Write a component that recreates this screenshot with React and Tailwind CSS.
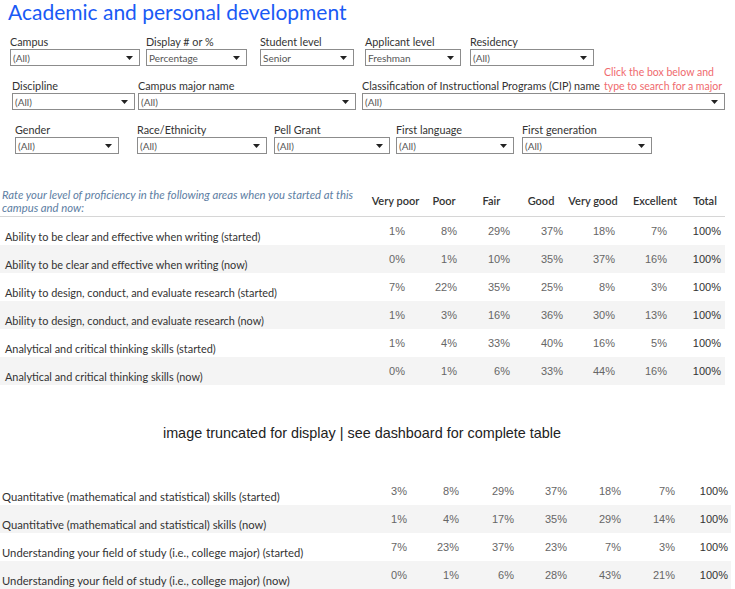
import React from 'react';

const topRows = [
  ['Ability to be clear and effective when writing (started)', ['1%', '8%', '29%', '37%', '18%', '7%', '100%']],
  ['Ability to be clear and effective when writing (now)', ['0%', '1%', '10%', '35%', '37%', '16%', '100%']],
  ['Ability to design, conduct, and evaluate research (started)', ['7%', '22%', '35%', '25%', '8%', '3%', '100%']],
  ['Ability to design, conduct, and evaluate research (now)', ['1%', '3%', '16%', '36%', '30%', '13%', '100%']],
  ['Analytical and critical thinking skills (started)', ['1%', '4%', '33%', '40%', '16%', '5%', '100%']],
  ['Analytical and critical thinking skills (now)', ['0%', '1%', '6%', '33%', '44%', '16%', '100%']],
];

const bottomRows = [
  ['Quantitative (mathematical and statistical) skills (started)', ['3%', '8%', '29%', '37%', '18%', '7%', '100%']],
  ['Quantitative (mathematical and statistical) skills (now)', ['1%', '4%', '17%', '35%', '29%', '14%', '100%']],
  ['Understanding your field of study (i.e., college major) (started)', ['7%', '23%', '37%', '23%', '7%', '3%', '100%']],
  ['Understanding your field of study (i.e., college major) (now)', ['0%', '1%', '6%', '28%', '43%', '21%', '100%']],
];

const headers = [
  ['Very poor', 'w-[51px]'],
  ['Poor', 'w-[46px]'],
  ['Fair', 'w-[49px]'],
  ['Good', 'w-[50px]'],
  ['Very good', 'w-[54px]'],
  ['Excellent', 'w-[70px]'],
  ['Total', 'w-[30px]'],
];

const topCols = ['w-[52px]', 'w-[52px]', 'w-[53px]', 'w-[53px]', 'w-[52px]', 'w-[52px]', 'w-[54px]'];
const bottomCols = ['w-[52px]', 'w-[52px]', 'w-[55px]', 'w-[53px]', 'w-[54px]', 'w-[54px]', 'w-[53px]'];

const Arrow = () => (
  <svg width="7" height="4" viewBox="0 0 7 4" className="shrink-0">
    <path d="M0 0h7L3.5 4z" fill="#222" />
  </svg>
);

// one quick filter: label over a dropdown box
const Filter = ({ label, value = '(All)', width, className = '' }) => (
  <div className={'flex flex-col ' + className}>
    <div className="h-[14px] leading-[14px] text-[10.8px] text-[#333] whitespace-nowrap">{label}</div>
    <div className={'h-[17px] border border-[#8c8c8c] bg-white flex items-center justify-between pl-[2px] pr-[6px] ' + width}>
      <span className="text-[10px] text-[#555] leading-none">{value}</span>
      <Arrow />
    </div>
  </div>
);

const Row = ({ label, values, cols, labelW, striped, pl, size }) => (
  <div className={'flex h-[28px] ' + (striped ? 'bg-[#f4f4f4]' : '')}>
    <div className={'self-end h-[15px] leading-[14px] text-[#333] whitespace-nowrap ' + labelW + ' ' + pl + ' ' + size}>{label}</div>
    {values.map((v, i) => (
      <div
        key={i}
        className={'flex items-center justify-end text-[11px] font-["Liberation_Sans",Arial,sans-serif] ' + cols[i] + (i === 6 ? ' text-[#333]' : ' text-[#666]')}
      >
        {v}
      </div>
    ))}
  </div>
);

const App = () => {
  return (
    <div className="w-[735px] h-[589px] overflow-hidden bg-white font-['Lato',sans-serif]">
      <h1 className="pl-[8px] h-[26px] leading-[24px] text-[21px] text-[#1a5af5]">Academic and personal development</h1>

      <div className="flex items-end mt-[9px]">
        <Filter label="Campus" width="w-[130px]" className="ml-[10px]" />
        <Filter label="Display # or %" value="Percentage" width="w-[101px]" className="ml-[6px]" />
        <Filter label="Student level" value="Senior" width="w-[94px]" className="ml-[13px]" />
        <Filter label="Applicant level" value="Freshman" width="w-[96px]" className="ml-[11px]" />
        <Filter label="Residency" width="w-[124px]" className="ml-[9px]" />
      </div>

      <div className="flex items-end mt-[13px]">
        <Filter label="Discipline" width="w-[123px]" className="ml-[12px]" />
        <Filter label="Campus major name" width="w-[218px]" className="ml-[3px]" />
        <div className="flex flex-col ml-[6px]">
          <div className="flex items-end h-[14px]">
            <div className="leading-[14px] text-[10.8px] text-[#333] whitespace-nowrap">Classification of Instructional Programs (CIP) name</div>
            <div className="h-[14px] flex flex-col justify-end ml-[4px]">
              <div className="leading-[14px] text-[10.5px] text-[#ef6a6e] whitespace-nowrap">Click the box below and<br />type to search for a major</div>
            </div>
          </div>
          <div className="h-[17px] w-[363px] border border-[#8c8c8c] bg-white flex items-center justify-between pl-[2px] pr-[6px]">
            <span className="text-[10px] text-[#555] leading-none">(All)</span>
            <Arrow />
          </div>
        </div>
      </div>

      <div className="flex items-end mt-[13px]">
        <Filter label="Gender" width="w-[104px]" className="ml-[15px]" />
        <Filter label="Race/Ethnicity" width="w-[130px]" className="ml-[18px]" />
        <Filter label="Pell Grant" width="w-[116px]" className="ml-[7px]" />
        <Filter label="First language" width="w-[118px]" className="ml-[6px]" />
        <Filter label="First generation" width="w-[130px]" className="ml-[8px]" />
      </div>

      <div className="mt-[32px] w-[725px]">
        <div className="flex items-center h-[31px] border-b border-[#d6d6d6]">
          <div className="w-[370px] pl-[2px] pr-[8px] italic text-[11.3px] leading-[13px] text-[#5d7ea3]">
            Rate your level of proficiency in the following areas when you started at this campus and now:
          </div>
          {headers.map(([h, w]) => (
            <div key={h} className={'text-center text-[11px] font-semibold text-[#333] whitespace-nowrap ' + w}>{h}</div>
          ))}
        </div>
        {topRows.map(([label, values], i) => (
          <Row key={label} label={label} values={values} cols={topCols} labelW="w-[353px]" pl="pl-[5px]" size="text-[10.9px]" striped={i % 2 === 1} />
        ))}
      </div>

      <div className="h-[92px] flex items-center justify-center pr-[11px] pt-[6px]">
        <span className="font-['Liberation_Sans',Arial,sans-serif] text-[14.4px] text-[#222]">image truncated for display | see dashboard for complete table</span>
      </div>

      <div className="w-[731px]">
        {bottomRows.map(([label, values], i) => (
          <Row key={label} label={label} values={values} cols={bottomCols} labelW="w-[355px]" pl="pl-[2px]" size="text-[11.25px]" striped={i % 2 === 1} />
        ))}
      </div>
    </div>
  );
};

export default App;
